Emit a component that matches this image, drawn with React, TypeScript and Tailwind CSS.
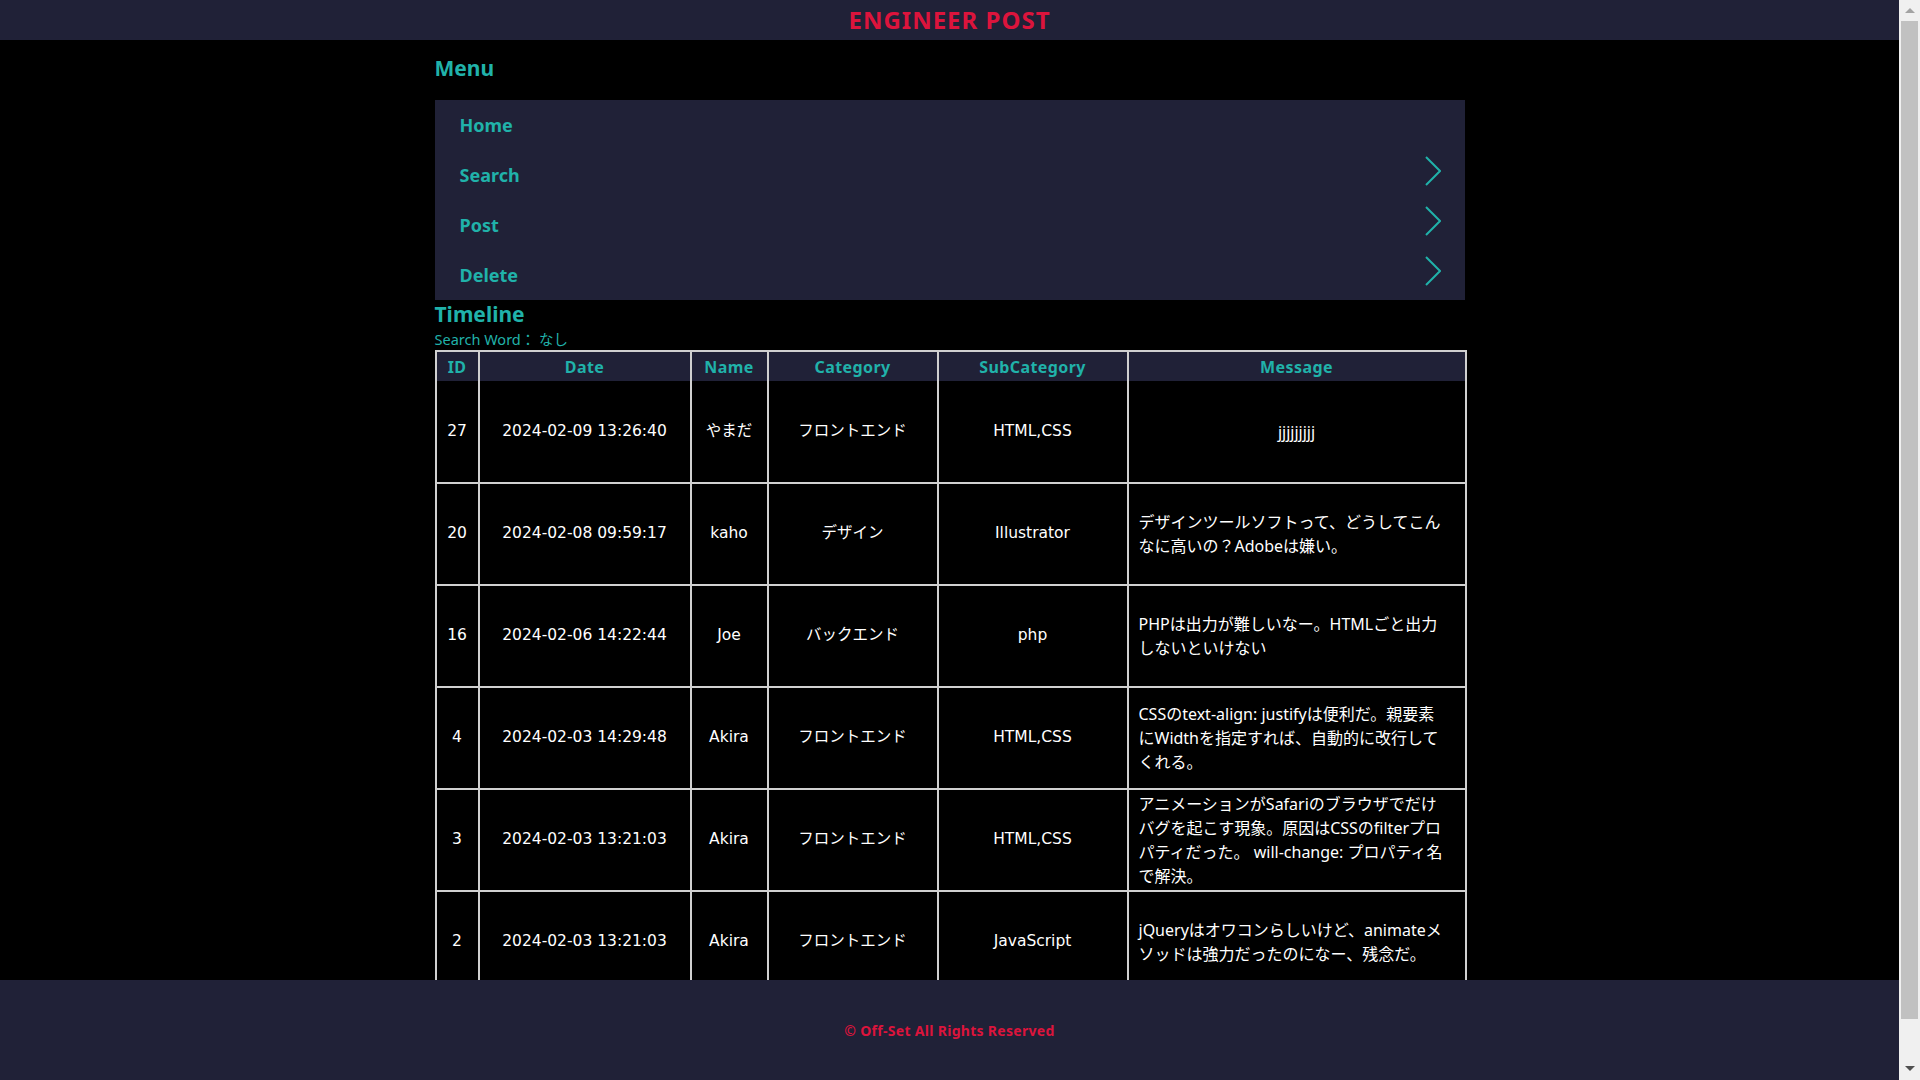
const posts = [
  {
    id: 27,
    date: "2024-02-09 13:26:40",
    name: "やまだ",
    category: "フロントエンド",
    sub: "HTML,CSS",
    message: ["jjjjjjjjj"],
  },
  {
    id: 20,
    date: "2024-02-08 09:59:17",
    name: "kaho",
    category: "デザイン",
    sub: "Illustrator",
    message: ["デザインツールソフトって、どうしてこん", "なに高いの？Adobeは嫌い。"],
  },
  {
    id: 16,
    date: "2024-02-06 14:22:44",
    name: "Joe",
    category: "バックエンド",
    sub: "php",
    message: ["PHPは出力が難しいなー。HTMLごと出力", "しないといけない"],
  },
  {
    id: 4,
    date: "2024-02-03 14:29:48",
    name: "Akira",
    category: "フロントエンド",
    sub: "HTML,CSS",
    message: [
      "CSSのtext-align: justifyは便利だ。親要素",
      "にWidthを指定すれば、自動的に改行して",
      "くれる。",
    ],
  },
  {
    id: 3,
    date: "2024-02-03 13:21:03",
    name: "Akira",
    category: "フロントエンド",
    sub: "HTML,CSS",
    message: [
      "アニメーションがSafariのブラウザでだけ",
      "バグを起こす現象。原因はCSSのfilterプロ",
      "パティだった。 will-change: プロパティ名",
      "で解決。",
    ],
  },
  {
    id: 2,
    date: "2024-02-03 13:21:03",
    name: "Akira",
    category: "フロントエンド",
    sub: "JavaScript",
    message: ["jQueryはオワコンらしいけど、animateメ", "ソッドは強力だったのになー、残念だ。"],
  },
];

const menu = [
  { label: "Home", arrow: false },
  { label: "Search", arrow: true },
  { label: "Post", arrow: true },
  { label: "Delete", arrow: true },
];

const heads = ["ID", "Date", "Name", "Category", "SubCategory", "Message"];

const cell = "border-x-2 border-b-2 border-[#d0d0d0] font-['DejaVu_Sans','Noto_Sans_CJK_JP',sans-serif] text-[15.5px]";

const Chevron = () => (
  <svg width="16" height="30" viewBox="0 0 16 30" className="mb-[8px]">
    <polyline points="1,1 15,15 1,29" fill="none" stroke="#20b2aa" strokeWidth="2" />
  </svg>
);

// the window scrollbar seen at the right edge of the shot
const Scrollbar = () => (
  <div className="fixed top-0 right-0 bottom-0 w-[21px] bg-[#f0f0f0] flex flex-col items-center">
    <div className="h-[21px] flex items-center justify-center">
      <div className="w-0 h-0 border-x-[5px] border-x-transparent border-b-[5px] border-b-[#a3a3a3]" />
    </div>
    <div className="w-[17px] h-[998px] bg-[#c1c1c1]" />
    <div className="flex-1 flex items-end justify-center pb-[9px]">
      <div className="w-0 h-0 border-x-[5px] border-x-transparent border-t-[5px] border-t-[#505050]" />
    </div>
  </div>
);

export default function App() {
  return (
    <div className="min-h-screen bg-black pr-[21px] font-['Noto_Sans','Noto_Sans_CJK_JP',sans-serif] text-white">
      <header className="h-[40px] bg-[#202137] flex items-center justify-center">
        <h1 className="text-[24px] font-bold tracking-[1px] text-[#dc143c] leading-none">ENGINEER POST</h1>
      </header>

      <main className="w-[1030px] mx-auto pt-[16px] pb-[140px]">
        <h2 className="text-[21px] leading-[24px] font-bold text-[#20b2aa]">Menu</h2>

        <nav className="mt-[20px] bg-[#202137]">
          {menu.map((m) => (
            <a
              key={m.label}
              href="#"
              className="h-[50px] pl-[25px] pr-[24px] flex items-center justify-between text-[18px] font-bold text-[#20b2aa]"
            >
              <span>{m.label}</span>
              {m.arrow && <Chevron />}
            </a>
          ))}
        </nav>

        <h2 className="text-[21px] leading-[28px] font-bold text-[#20b2aa]">Timeline</h2>
        <p className="text-[14.5px] leading-[22px] text-[#20b2aa]">Search Word： なし</p>

        <table className="w-full table-fixed border-collapse text-[16px]">
          <colgroup>
            <col className="w-[43px]" />
            <col className="w-[212px]" />
            <col className="w-[77px]" />
            <col className="w-[170px]" />
            <col className="w-[190px]" />
            <col className="w-[338px]" />
          </colgroup>
          <thead>
            <tr>
              {heads.map((h) => (
                <th
                  key={h}
                  className="h-[30px] bg-[#202137] text-[#20b2aa] font-bold tracking-[0.4px] border-x-2 border-t-2 border-[#d0d0d0]"
                >
                  {h}
                </th>
              ))}
            </tr>
          </thead>
          <tbody>
            {posts.map((p) => (
              <tr key={p.id} className="text-center">
                <td className={`h-[102px] ${cell}`}>{p.id}</td>
                <td className={cell}>{p.date}</td>
                <td className={cell}>{p.name}</td>
                <td className={cell}>{p.category}</td>
                <td className={cell}>{p.sub}</td>
                <td className="px-[10px] border-x-2 border-b-2 border-[#d0d0d0]">
                  <span
                    className={
                      p.message.length > 1
                        ? "block w-full text-left leading-[24px] whitespace-nowrap"
                        : "inline-block text-left leading-[24px] whitespace-nowrap"
                    }
                  >
                    {p.message.map((line, i) => (
                      <span key={i} className="block">
                        {line}
                      </span>
                    ))}
                  </span>
                </td>
              </tr>
            ))}
          </tbody>
        </table>
      </main>

      <footer className="fixed bottom-0 left-0 right-[21px] h-[100px] bg-[#202137] flex items-center justify-center">
        <p className="text-[14px] font-bold tracking-[0.3px] text-[#dc143c]">© Off-Set All Rights Reserved</p>
      </footer>

      <Scrollbar />
    </div>
  );
}
